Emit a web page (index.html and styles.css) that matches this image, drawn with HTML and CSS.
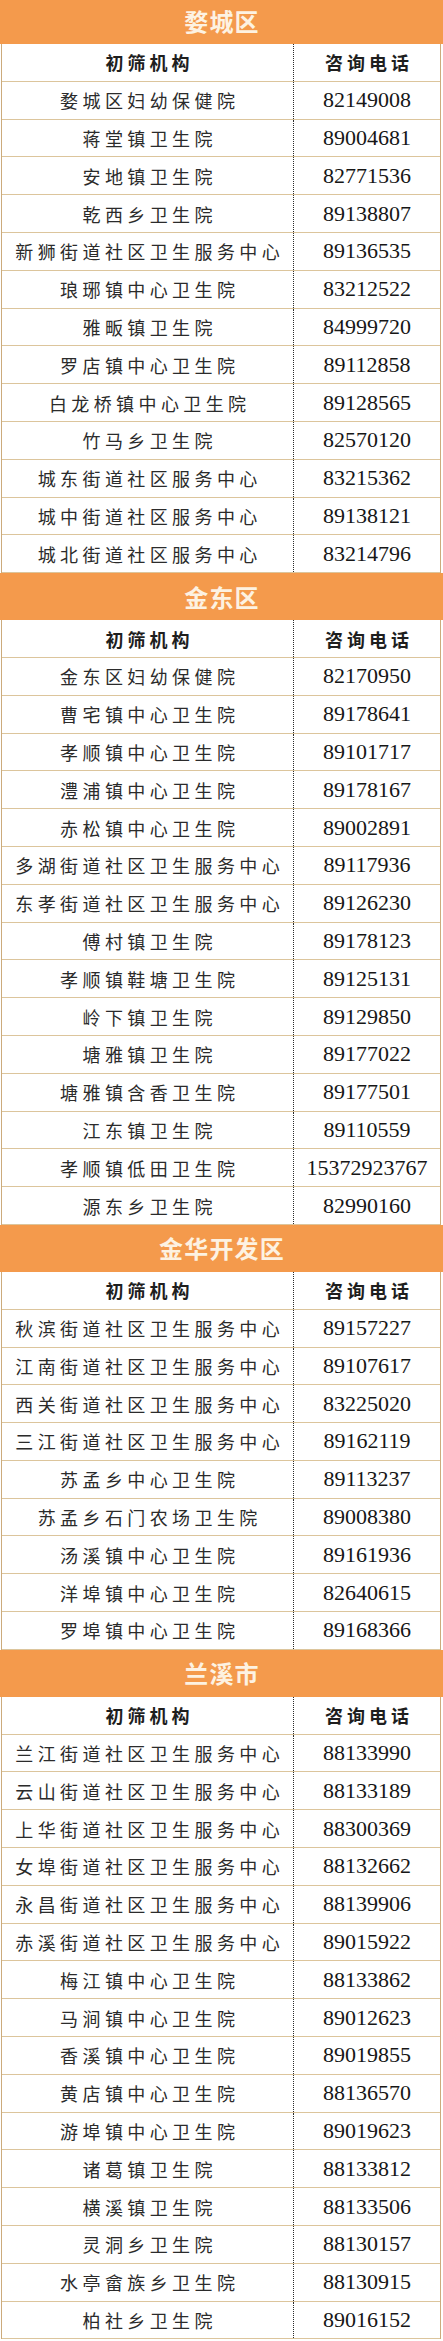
FILE: index.html
```html
<!DOCTYPE html>
<html lang="zh-CN">
<head>
<meta charset="utf-8">
<title>初筛机构</title>
<link rel="stylesheet" href="styles.css">
</head>
<body>
<div class="sheet">
  <section class="section">
    <div class="title first">婺城区</div>
    <div class="rows">
      <div class="row head"><div class="org">初筛机构</div><div class="tel">咨询电话</div></div>
      <div class="row"><div class="org">婺城区妇幼保健院</div><div class="tel">82149008</div></div>
      <div class="row"><div class="org">蒋堂镇卫生院</div><div class="tel">89004681</div></div>
      <div class="row"><div class="org">安地镇卫生院</div><div class="tel">82771536</div></div>
      <div class="row"><div class="org">乾西乡卫生院</div><div class="tel">89138807</div></div>
      <div class="row"><div class="org">新狮街道社区卫生服务中心</div><div class="tel">89136535</div></div>
      <div class="row"><div class="org">琅琊镇中心卫生院</div><div class="tel">83212522</div></div>
      <div class="row"><div class="org">雅畈镇卫生院</div><div class="tel">84999720</div></div>
      <div class="row"><div class="org">罗店镇中心卫生院</div><div class="tel">89112858</div></div>
      <div class="row"><div class="org">白龙桥镇中心卫生院</div><div class="tel">89128565</div></div>
      <div class="row"><div class="org">竹马乡卫生院</div><div class="tel">82570120</div></div>
      <div class="row"><div class="org">城东街道社区服务中心</div><div class="tel">83215362</div></div>
      <div class="row"><div class="org">城中街道社区服务中心</div><div class="tel">89138121</div></div>
      <div class="row"><div class="org">城北街道社区服务中心</div><div class="tel">83214796</div></div>
    </div>
  </section>
  <section class="section">
    <div class="title">金东区</div>
    <div class="rows">
      <div class="row head"><div class="org">初筛机构</div><div class="tel">咨询电话</div></div>
      <div class="row"><div class="org">金东区妇幼保健院</div><div class="tel">82170950</div></div>
      <div class="row"><div class="org">曹宅镇中心卫生院</div><div class="tel">89178641</div></div>
      <div class="row"><div class="org">孝顺镇中心卫生院</div><div class="tel">89101717</div></div>
      <div class="row"><div class="org">澧浦镇中心卫生院</div><div class="tel">89178167</div></div>
      <div class="row"><div class="org">赤松镇中心卫生院</div><div class="tel">89002891</div></div>
      <div class="row"><div class="org">多湖街道社区卫生服务中心</div><div class="tel">89117936</div></div>
      <div class="row"><div class="org">东孝街道社区卫生服务中心</div><div class="tel">89126230</div></div>
      <div class="row"><div class="org">傅村镇卫生院</div><div class="tel">89178123</div></div>
      <div class="row"><div class="org">孝顺镇鞋塘卫生院</div><div class="tel">89125131</div></div>
      <div class="row"><div class="org">岭下镇卫生院</div><div class="tel">89129850</div></div>
      <div class="row"><div class="org">塘雅镇卫生院</div><div class="tel">89177022</div></div>
      <div class="row"><div class="org">塘雅镇含香卫生院</div><div class="tel">89177501</div></div>
      <div class="row"><div class="org">江东镇卫生院</div><div class="tel">89110559</div></div>
      <div class="row"><div class="org">孝顺镇低田卫生院</div><div class="tel">15372923767</div></div>
      <div class="row"><div class="org">源东乡卫生院</div><div class="tel">82990160</div></div>
    </div>
  </section>
  <section class="section">
    <div class="title">金华开发区</div>
    <div class="rows">
      <div class="row head"><div class="org">初筛机构</div><div class="tel">咨询电话</div></div>
      <div class="row"><div class="org">秋滨街道社区卫生服务中心</div><div class="tel">89157227</div></div>
      <div class="row"><div class="org">江南街道社区卫生服务中心</div><div class="tel">89107617</div></div>
      <div class="row"><div class="org">西关街道社区卫生服务中心</div><div class="tel">83225020</div></div>
      <div class="row"><div class="org">三江街道社区卫生服务中心</div><div class="tel">89162119</div></div>
      <div class="row"><div class="org">苏孟乡中心卫生院</div><div class="tel">89113237</div></div>
      <div class="row"><div class="org">苏孟乡石门农场卫生院</div><div class="tel">89008380</div></div>
      <div class="row"><div class="org">汤溪镇中心卫生院</div><div class="tel">89161936</div></div>
      <div class="row"><div class="org">洋埠镇中心卫生院</div><div class="tel">82640615</div></div>
      <div class="row"><div class="org">罗埠镇中心卫生院</div><div class="tel">89168366</div></div>
    </div>
  </section>
  <section class="section">
    <div class="title">兰溪市</div>
    <div class="rows">
      <div class="row head"><div class="org">初筛机构</div><div class="tel">咨询电话</div></div>
      <div class="row"><div class="org">兰江街道社区卫生服务中心</div><div class="tel">88133990</div></div>
      <div class="row"><div class="org">云山街道社区卫生服务中心</div><div class="tel">88133189</div></div>
      <div class="row"><div class="org">上华街道社区卫生服务中心</div><div class="tel">88300369</div></div>
      <div class="row"><div class="org">女埠街道社区卫生服务中心</div><div class="tel">88132662</div></div>
      <div class="row"><div class="org">永昌街道社区卫生服务中心</div><div class="tel">88139906</div></div>
      <div class="row"><div class="org">赤溪街道社区卫生服务中心</div><div class="tel">89015922</div></div>
      <div class="row"><div class="org">梅江镇中心卫生院</div><div class="tel">88133862</div></div>
      <div class="row"><div class="org">马涧镇中心卫生院</div><div class="tel">89012623</div></div>
      <div class="row"><div class="org">香溪镇中心卫生院</div><div class="tel">89019855</div></div>
      <div class="row"><div class="org">黄店镇中心卫生院</div><div class="tel">88136570</div></div>
      <div class="row"><div class="org">游埠镇中心卫生院</div><div class="tel">89019623</div></div>
      <div class="row"><div class="org">诸葛镇卫生院</div><div class="tel">88133812</div></div>
      <div class="row"><div class="org">横溪镇卫生院</div><div class="tel">88133506</div></div>
      <div class="row"><div class="org">灵洞乡卫生院</div><div class="tel">88130157</div></div>
      <div class="row"><div class="org">水亭畲族乡卫生院</div><div class="tel">88130915</div></div>
      <div class="row"><div class="org">柏社乡卫生院</div><div class="tel">89016152</div></div>
    </div>
  </section>
</div>
</body>
</html>
```

FILE: styles.css
```css
html, body {
  margin: 0;
  padding: 0;
  background: #ffffff;
}

.sheet {
  width: 443px;
  display: flex;
  flex-direction: column;
}

.section {
  display: flex;
  flex-direction: column;
}

.title {
  height: 47px;
  box-sizing: border-box;
  background: #f49a4c;
  color: #fdf2e2;
  display: flex;
  align-items: center;
  justify-content: center;
  font-family: "Noto Sans CJK SC", "Noto Sans", sans-serif;
  font-weight: 700;
  font-size: 24px;
  letter-spacing: 1.2px;
  padding-left: 1px;
  line-height: 1;
}

.title.first {
  height: 44px;
  padding-bottom: 3px;
}

.rows {
  margin: 0 2px 0 1px;
  border-left: 1px solid #ccab7c;
  border-right: 1px solid #ccab7c;
  display: flex;
  flex-direction: column;
}

.row {
  height: 37.8px;
  box-sizing: border-box;
  border-bottom: 1px solid #dcc59c;
  display: grid;
  grid-template-columns: 292px 1fr;
}

.org {
  display: flex;
  align-items: center;
  justify-content: center;
  border-right: 1px dotted #2a2a2a;
  font-family: "Noto Sans CJK SC", sans-serif;
  font-size: 18px;
  font-weight: 400;
  color: #2b2b2b;
  letter-spacing: 4.4px;
  padding-left: 4.4px;
  line-height: 1;
  white-space: nowrap;
}

.tel {
  display: flex;
  align-items: center;
  justify-content: center;
  font-family: "Liberation Serif", "Times New Roman", serif;
  font-size: 22px;
  color: #161616;
  line-height: 1;
  white-space: nowrap;
}

.head .org,
.head .tel {
  font-family: "Noto Sans CJK SC", sans-serif;
  font-weight: 700;
  font-size: 18px;
  letter-spacing: 4px;
  padding-left: 4px;
  color: #1e1e1e;
}
```
